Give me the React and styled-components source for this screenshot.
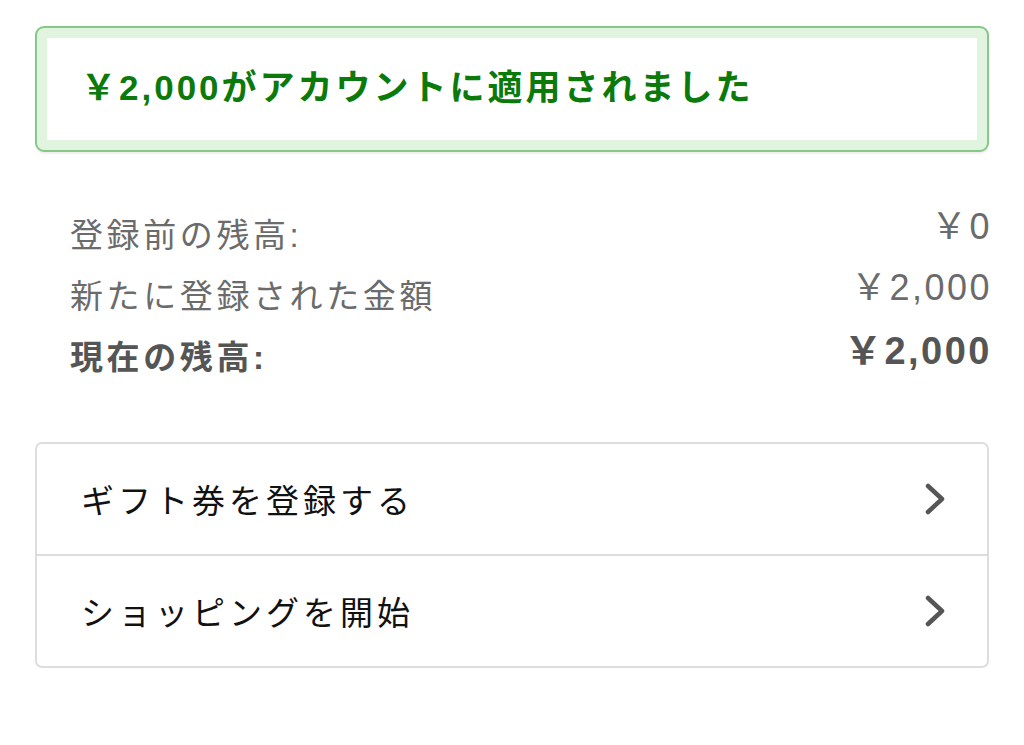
import styled, { createGlobalStyle } from 'styled-components';

const GlobalStyle = createGlobalStyle`
  html, body {
    margin: 0;
    padding: 0;
    background: #ffffff;
  }
  body {
    font-family: "Liberation Sans", "Noto Sans CJK JP", sans-serif;
  }
`;

const Page = styled.div`
  width: 954px;
  padding: 26px 35px 0 35px;
  display: flex;
  flex-direction: column;
`;

const Alert = styled.div`
  height: 126px;
  box-sizing: border-box;
  border: 2px solid #86c986;
  border-radius: 9px;
  padding: 10px;
  background: #e0f4e0;
  box-shadow: 0 2px 1px rgba(0, 0, 0, 0.06);
`;

const AlertInner = styled.div`
  height: 100%;
  background: #ffffff;
  display: flex;
  align-items: center;
  padding-left: 34px;
  padding-bottom: 10px;
  box-sizing: border-box;
`;

const AlertText = styled.h4`
  margin: 0;
  font-size: 35px;
  font-weight: 700;
  color: #0b7a0b;
  letter-spacing: 3px;
`;

const Summary = styled.div`
  margin-top: 50px;
  padding-left: 35px;
  display: flex;
  flex-direction: column;
`;

const Row = styled.div`
  display: flex;
  justify-content: space-between;
  align-items: center;
  height: 61px;
  font-size: 33px;
  letter-spacing: 3.6px;
  color: ${p => (p.$total ? '#555555' : '#6b6b6b')};
  font-weight: ${p => (p.$total ? 700 : 400)};
`;

const Amount = styled.span`
  font-size: ${p => (p.$total ? '38px' : '36px')};
  letter-spacing: 2.5px;
  margin-right: -3px;
  margin-top: ${p => (p.$total ? '-14px' : '-20px')};
`;

const Actions = styled.div`
  margin-top: 57px;
  display: flex;
  flex-direction: column;
`;

const ActionItem = styled.a`
  display: flex;
  align-items: center;
  justify-content: space-between;
  height: 114px;
  box-sizing: border-box;
  padding: 0 40px 0 44px;
  border: 2px solid #dddddd;
  border-radius: ${p => (p.$first ? '7px 7px 0 0' : '0 0 7px 7px')};
  margin-top: ${p => (p.$first ? '0' : '-2px')};
  color: #111111;
  font-size: 33px;
  letter-spacing: 4px;
  text-decoration: none;
  background: #ffffff;
`;

const Chevron = () => (
  <svg width="24" height="32" viewBox="0 0 24 32" fill="none">
    <path d="M5 3 L19 16 L5 29" stroke="#555555" strokeWidth="4.5" strokeLinecap="round" strokeLinejoin="round" />
  </svg>
);

export default function App() {
  return (
    <>
      <GlobalStyle />
      <Page>
        <Alert>
          <AlertInner>
            <AlertText>￥2,000がアカウントに適用されました</AlertText>
          </AlertInner>
        </Alert>
        <Summary>
          <Row>
            <span>登録前の残高:</span>
            <Amount>￥0</Amount>
          </Row>
          <Row>
            <span>新たに登録された金額</span>
            <Amount>￥2,000</Amount>
          </Row>
          <Row $total>
            <span>現在の残高:</span>
            <Amount $total>￥2,000</Amount>
          </Row>
        </Summary>
        <Actions>
          <ActionItem $first href="#">
            <span>ギフト券を登録する</span>
            <Chevron />
          </ActionItem>
          <ActionItem href="#">
            <span>ショッピングを開始</span>
            <Chevron />
          </ActionItem>
        </Actions>
      </Page>
    </>
  );
}
